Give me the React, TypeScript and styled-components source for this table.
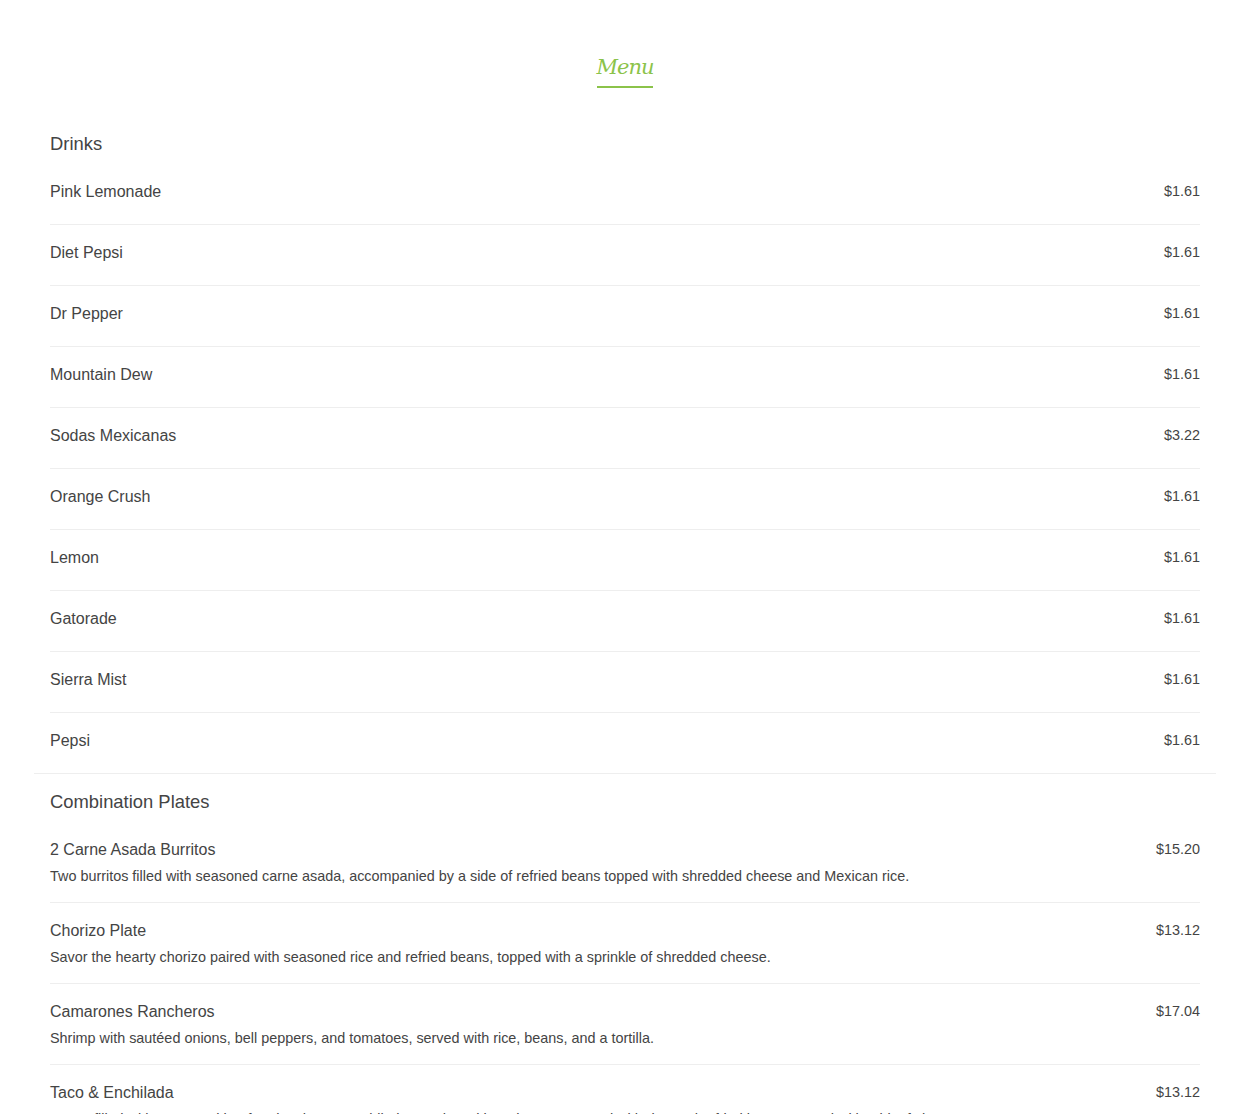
import styled, { createGlobalStyle } from 'styled-components';

const GlobalStyle = createGlobalStyle`
  body {
    margin: 0;
    background: #ffffff;
    font-family: "Liberation Sans", Arial, sans-serif;
    color: #444444;
  }
`;

const Page = styled.div`
  padding: 53px 34px 40px;
`;

const TitleWrap = styled.div`
  display: flex;
  justify-content: center;
  margin-bottom: 28px;
`;

const Title = styled.h1`
  margin: 0;
  padding-bottom: 4px;
  border-bottom: 2px solid #8bc34a;
  font-family: "DejaVu Serif", "Liberation Serif", serif;
  font-style: italic;
  font-weight: normal;
  font-size: 21px;
  line-height: 29px;
  letter-spacing: -1px;
  color: #8bc34a;
`;

const Section = styled.section`
  padding: 17px 16px 0;
  border-bottom: 1px solid #eeeeee;
`;

const SectionTitle = styled.h2`
  margin: 0 0 9px;
  font-size: 18.4px;
  line-height: 22px;
  font-weight: normal;
  color: #444444;
`;

const Item = styled.div<{ $last?: boolean }>`
  display: flex;
  justify-content: space-between;
  align-items: flex-start;
  gap: 24px;
  padding: 18px 0 16px;
  border-bottom: ${(p) => (p.$last ? 'none' : '1px solid #eeeeee')};
`;

const ItemBody = styled.div`
  display: flex;
  flex-direction: column;
`;

const ItemName = styled.div`
  font-size: 16px;
  line-height: 20px;
  margin-bottom: 6px;
  color: #444444;
`;

const ItemDesc = styled.p`
  margin: 1px 0 1px;
  font-size: 14.4px;
  line-height: 18px;
  color: #444444;
`;

const Price = styled.div`
  font-size: 14.4px;
  line-height: 18px;
  color: #444444;
  white-space: nowrap;
`;

type MenuItem = { name: string; price: string; desc?: string };

const drinks: MenuItem[] = [
  { name: 'Pink Lemonade', price: '$1.61' },
  { name: 'Diet Pepsi', price: '$1.61' },
  { name: 'Dr Pepper', price: '$1.61' },
  { name: 'Mountain Dew', price: '$1.61' },
  { name: 'Sodas Mexicanas', price: '$3.22' },
  { name: 'Orange Crush', price: '$1.61' },
  { name: 'Lemon', price: '$1.61' },
  { name: 'Gatorade', price: '$1.61' },
  { name: 'Sierra Mist', price: '$1.61' },
  { name: 'Pepsi', price: '$1.61' },
];

const plates: MenuItem[] = [
  {
    name: '2 Carne Asada Burritos',
    price: '$15.20',
    desc: 'Two burritos filled with seasoned carne asada, accompanied by a side of refried beans topped with shredded cheese and Mexican rice.',
  },
  {
    name: 'Chorizo Plate',
    price: '$13.12',
    desc: 'Savor the hearty chorizo paired with seasoned rice and refried beans, topped with a sprinkle of shredded cheese.',
  },
  {
    name: 'Camarones Rancheros',
    price: '$17.04',
    desc: 'Shrimp with sautéed onions, bell peppers, and tomatoes, served with rice, beans, and a tortilla.',
  },
  {
    name: 'Taco & Enchilada',
    price: '$13.12',
    desc: 'A taco filled with seasoned beef and a cheese enchilada smothered in red sauce, served with rice and refried beans topped with a bit of cheese.',
  },
];

function MenuSection({ title, items }: { title: string; items: MenuItem[] }) {
  return (
    <Section>
      <SectionTitle>{title}</SectionTitle>
      {items.map((item, i) => (
        <Item key={item.name} $last={i === items.length - 1}>
          <ItemBody>
            <ItemName>{item.name}</ItemName>
            {item.desc && <ItemDesc>{item.desc}</ItemDesc>}
          </ItemBody>
          <Price>{item.price}</Price>
        </Item>
      ))}
    </Section>
  );
}

export default function App() {
  return (
    <>
      <GlobalStyle />
      <Page>
        <TitleWrap>
          <Title>Menu</Title>
        </TitleWrap>
        <MenuSection title="Drinks" items={drinks} />
        <MenuSection title="Combination Plates" items={plates} />
      </Page>
    </>
  );
}
